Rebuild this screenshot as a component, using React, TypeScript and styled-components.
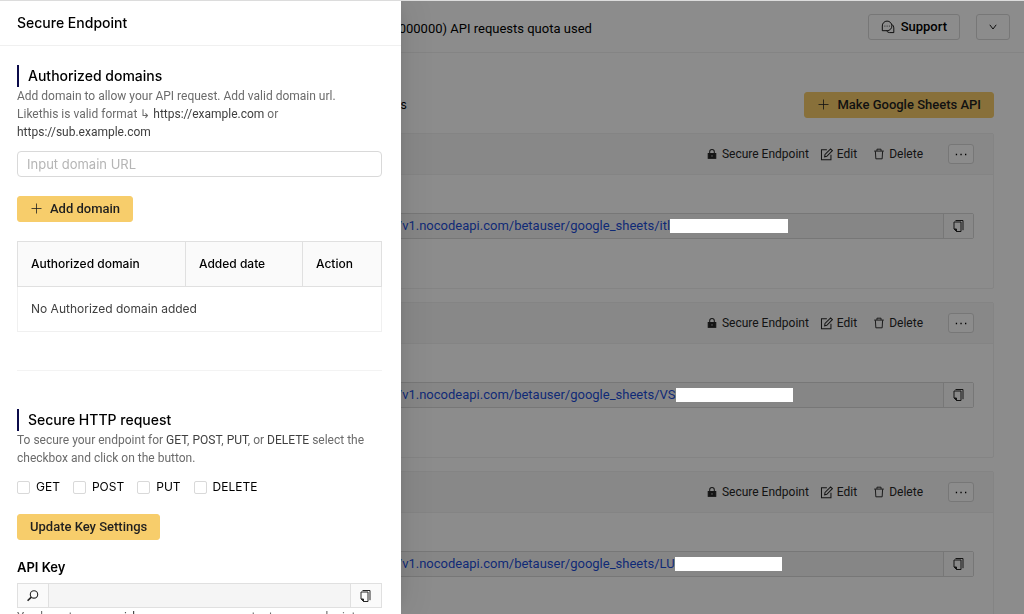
import React from "react";
import styled, { createGlobalStyle } from "styled-components";

const GlobalStyle = createGlobalStyle`
  *, *::before, *::after { box-sizing: border-box; }
  html, body { margin: 0; background: #fff; overflow: hidden; }
  body, button, input { font-family: Inter, "Liberation Sans", sans-serif; }
  body { color: #000; font-size: 12px; line-height: 18px; }
  button, input { margin: 0; }
  h1, h2, h3, p { margin: 0; }
`;

const narrow = `Roboto, "Liberation Sans", sans-serif`;

const Icon = styled.svg<{ $size?: number }>`
  flex: none;
  width: ${(p) => p.$size ?? 14}px;
  height: ${(p) => p.$size ?? 14}px;
  fill: none;
  stroke: currentColor;
`;

const PlusIcon = () => (
  <Icon viewBox="0 0 14 14" strokeWidth="0.8" aria-hidden="true">
    <path d="M6.5 1.5v10M1.5 6.5h10" />
  </Icon>
);

const CopyIcon = () => (
  <Icon viewBox="0 0 14 14" strokeWidth="1" aria-hidden="true">
    <path d="M2 3h7v9.5H4.5L2 10z" />
    <path d="M2 10h2.5v2.5z" fill="currentColor" />
    <path d="M3.5 1.5H11v9.7" />
  </Icon>
);

const SearchIcon = () => (
  <Icon viewBox="0 0 14 14" strokeWidth="1.1" aria-hidden="true">
    <circle cx="8" cy="5.4" r="3.7" />
    <path d="M5.3 8.1 1.6 11.8" strokeWidth="1.6" />
  </Icon>
);

const LockIcon = () => (
  <Icon viewBox="0 0 11 13" $size={12} strokeWidth="1.1" aria-hidden="true">
    <path d="M3 6V4a2.5 2.5 0 0 1 5 0v2" />
    <rect x="1.4" y="6" width="8.2" height="5.2" fill="currentColor" />
    <path d="M5.5 7.8v1.6" stroke="#ccc" strokeWidth="1" />
  </Icon>
);

const EditIcon = () => (
  <Icon viewBox="0 0 14 14" $size={13} strokeWidth="1.1" aria-hidden="true">
    <path d="M7.4 2H1.6v10.6h10.2V7.4" />
    <path d="m5 9.4.4-2.4 6-6 1.9 1.9-6 6z" />
  </Icon>
);

const TrashIcon = () => (
  <Icon viewBox="0 0 14 14" $size={12} strokeWidth="1.1" aria-hidden="true">
    <path d="M1.4 3.6h11.2M4.6 3.4V1.4h4.8v2M2.8 3.8l.5 8.8h7.4l.5-8.8" />
  </Icon>
);

const ChatIcon = () => (
  <Icon viewBox="0 0 14 14" strokeWidth="0.9" aria-hidden="true">
    <path d="M1.3 10.7V6a4.8 4.8 0 1 1 4.8 4.7z" />
    <path d="M11.3 4.6a4.4 4.4 0 0 1 1.5 3.3v4.7H8.6a4.4 4.4 0 0 1-3-1.6" />
    <path d="M3.5 6.1h.8M5.7 6.1h.8M7.9 6.1h.8" />
  </Icon>
);

const ChevronIcon = () => (
  <Icon viewBox="0 0 10 10" $size={10} strokeWidth="0.9" aria-hidden="true">
    <path d="m1.8 2.8 3.2 4.2 3.2-4.2" />
  </Icon>
);

const DotsIcon = () => (
  <Icon viewBox="0 0 14 14" strokeWidth="1.3" aria-hidden="true">
    <path d="M1.8 7.5h1.3M6.4 7.5h1.3M11 7.5h1.3" />
  </Icon>
);

/* Page behind the drawer */

const TopBar = styled.header`
  display: flex;
  align-items: center;
  gap: 16px;
  height: 53px;
  padding: 1px 14px 0 318px;
  border-bottom: 1px solid #f0f0f0;
`;

const Quota = styled.span`
  flex: 1;
  padding-top: 4px;
  font-family: ${narrow};
  font-size: 13px;
`;

const Button = styled.button<{ $primary?: boolean }>`
  display: inline-flex;
  align-items: center;
  justify-content: center;
  gap: 6px;
  height: 26px;
  padding: 0 12px;
  border: 1px solid ${(p) => (p.$primary ? "#f7cd6b" : "#d9d9d9")};
  border-radius: 3px;
  background: ${(p) => (p.$primary ? "#f7cd6b" : "#fff")};
  color: ${(p) => (p.$primary ? "#1f1f1f" : "#000")};
  font-family: ${narrow};
  font-size: 13px;
  font-weight: 500;
  line-height: 18px;
  white-space: nowrap;
`;

const MenuButton = styled(Button)`
  width: 34px;
  padding: 0;
`;

const Main = styled.main`
  padding: 39px 30px 0 289px;
`;

const TitleRow = styled.div`
  display: flex;
  align-items: center;
  justify-content: space-between;
  margin-bottom: 15px;
  padding-left: 6px;
`;

const PageTitle = styled.h1`
  font-size: 12px;
  font-weight: 400;
  line-height: 18px;
`;

const CardList = styled.div`
  display: flex;
  flex-direction: column;
  gap: 13px;
`;

const Card = styled.article`
  border: 1px solid #f0f0f0;
  border-radius: 2px;
`;

const CardHeader = styled.div`
  display: flex;
  align-items: center;
  justify-content: flex-end;
  height: 41px;
  padding: 0 19px;
  border-bottom: 1px solid #f0f0f0;
  background: #f7f7f7;
`;

const CardAction = styled.button<{ $gap: number }>`
  display: inline-flex;
  align-items: center;
  gap: 4px;
  margin-right: ${(p) => p.$gap}px;
  padding: 0;
  border: 0;
  background: none;
  color: #262626;
  font-family: ${narrow};
  font-size: 12px;
  line-height: 18px;
`;

const MoreButton = styled(Button)`
  width: 26px;
  height: 20px;
  padding: 0;
`;

const CardBody = styled.div`
  padding: 38px 19px 49px;
`;

const Endpoint = styled.div`
  display: flex;
  height: 26px;
  border: 1px solid #d9d9d9;
  border-radius: 2px;
  background: #f5f5f5;
`;

const EndpointUrl = styled.div`
  display: flex;
  flex: 1;
  align-items: center;
  padding-left: 50px;
`;

const EndpointLink = styled.a`
  color: #1d4ed8;
  font-family: ${narrow};
  font-size: 13px;
  text-decoration: none;
`;

const Redaction = styled.span<{ $width: number }>`
  position: relative;
  z-index: 11;
  width: ${(p) => p.$width}px;
  height: 14px;
  background: #fff;
`;

const CopyButton = styled.button`
  display: flex;
  align-items: center;
  justify-content: center;
  width: 30px;
  padding: 0;
  border: 0;
  border-left: 1px solid #d9d9d9;
  background: #fafafa;
  color: #262626;
`;

/* Drawer */

const Mask = styled.div`
  position: fixed;
  inset: 0;
  z-index: 10;
  background: rgba(0, 0, 0, 0.45);
`;

const Drawer = styled.aside`
  position: fixed;
  top: 0;
  bottom: 0;
  left: 0;
  z-index: 20;
  width: 401px;
  overflow: hidden;
  background: #fff;
  box-shadow: 6px 0 16px -8px rgba(0, 0, 0, 0.1), 9px 0 28px rgba(0, 0, 0, 0.06);
`;

const WindowEdge = styled.div`
  position: fixed;
  top: 0;
  left: 0;
  right: 0;
  z-index: 30;
  height: 1px;
  background: #dcdcdc;
`;

const DrawerHeader = styled.div`
  padding: 14px 17px 13px;
  border-bottom: 1px solid #f0f0f0;
`;

const DrawerTitle = styled.h2`
  font-size: 14px;
  font-weight: 500;
  line-height: 18px;
`;

const DrawerBody = styled.div`
  padding: 19px 19px 0 17px;
`;

const SectionTitle = styled.h3`
  padding-left: 9px;
  border-left: 2px solid #0b0b4a;
  font-size: 14px;
  font-weight: 500;
  line-height: 22px;
`;

const Text = styled.p`
  color: #6b6b6b;
  font-family: ${narrow};
  font-size: 12px;
  line-height: 18px;
`;

const Strong = styled.span`
  color: #404040;
`;

const DomainInput = styled.input`
  display: block;
  width: 100%;
  height: 26px;
  margin: 10px 0 19px;
  padding: 0 9px;
  border: 1px solid #d9d9d9;
  border-radius: 4px;
  color: #262626;
  font-size: 13px;
  &::placeholder { color: #b5b5b5; }
`;

const Table = styled.table`
  width: 100%;
  margin: 19px 0 38px;
  border-collapse: collapse;
  table-layout: fixed;
  text-align: left;
`;

const Th = styled.th<{ $width?: number }>`
  width: ${(p) => (p.$width ? `${p.$width}px` : "auto")};
  height: 45px;
  padding: 0 13px;
  border: 1px solid #e0e0e0;
  background: #fafafa;
  font-weight: 500;
`;

const Td = styled.td`
  height: 45px;
  padding: 0 13px;
  border: 1px solid #f0f0f0;
  color: #404040;
`;

const Divider = styled.hr`
  height: 1px;
  margin: 0 0 38px;
  border: 0;
  background: #f3f3f3;
`;

const Methods = styled.div`
  display: flex;
  gap: 13px;
  margin: 11px 0 18px;
`;

const Method = styled.label`
  display: flex;
  align-items: center;
  gap: 6px;
`;

const Checkbox = styled.input`
  appearance: none;
  width: 13px;
  height: 13px;
  border: 1px solid #d9d9d9;
  border-radius: 2px;
  background: #fff;
`;

const KeyLabel = styled.label`
  display: block;
  margin: 18px 0 7px;
  font-size: 13px;
  font-weight: 600;
`;

const KeyRow = styled.div`
  display: flex;
  height: 25px;
  border: 1px solid #e0e0e0;
`;

const KeyAddon = styled.button`
  display: flex;
  align-items: center;
  justify-content: center;
  width: 30px;
  padding: 0;
  border: 0;
  background: #fafafa;
  color: #262626;
`;

const KeyInput = styled.input`
  flex: 1;
  min-width: 0;
  border: 0;
  border-left: 1px solid #e0e0e0;
  border-right: 1px solid #e0e0e0;
  background: #f5f5f5;
`;

const endpoints = [
  { id: "itl", hidden: 118 },
  { id: "VS", hidden: 117 },
  { id: "LU", hidden: 107 },
];

const methods = ["GET", "POST", "PUT", "DELETE"];

export default function App() {
  return (
    <>
      <GlobalStyle />
      <TopBar>
        <Quota>Free plan (0/1000000) API requests quota used</Quota>
        <Button type="button"><ChatIcon />Support</Button>
        <MenuButton type="button" aria-label="Account"><ChevronIcon /></MenuButton>
      </TopBar>
      <Main>
        <TitleRow>
          <PageTitle>Google Sheets APIs</PageTitle>
          <Button type="button" $primary><PlusIcon />Make Google Sheets API</Button>
        </TitleRow>
        <CardList>
          {endpoints.map((e) => (
            <Card key={e.id}>
              <CardHeader>
                <CardAction type="button" $gap={11}><LockIcon />Secure Endpoint</CardAction>
                <CardAction type="button" $gap={16}><EditIcon />Edit</CardAction>
                <CardAction type="button" $gap={25}><TrashIcon />Delete</CardAction>
                <MoreButton type="button" aria-label="More"><DotsIcon /></MoreButton>
              </CardHeader>
              <CardBody>
                <Endpoint>
                  <EndpointUrl>
                    <EndpointLink href="#">{`https://v1.nocodeapi.com/betauser/google_sheets/${e.id}`}</EndpointLink>
                    <Redaction $width={e.hidden} />
                  </EndpointUrl>
                  <CopyButton type="button" aria-label="Copy"><CopyIcon /></CopyButton>
                </Endpoint>
              </CardBody>
            </Card>
          ))}
        </CardList>
      </Main>
      <Mask />
      <Drawer>
        <DrawerHeader><DrawerTitle>Secure Endpoint</DrawerTitle></DrawerHeader>
        <DrawerBody>
          <SectionTitle>Authorized domains</SectionTitle>
          <Text>
            Add domain to allow your API request. Add valid domain url.<br />
            Likethis is valid format ↳ <Strong>https://example.com</Strong> or<br />
            <Strong>https://sub.example.com</Strong>
          </Text>
          <DomainInput type="text" placeholder="Input domain URL" aria-label="Domain URL" />
          <Button type="button" $primary><PlusIcon />Add domain</Button>
          <Table>
            <thead>
              <tr>
                <Th $width={168}>Authorized domain</Th>
                <Th $width={117}>Added date</Th>
                <Th>Action</Th>
              </tr>
            </thead>
            <tbody>
              <tr><Td colSpan={3}>No Authorized domain added</Td></tr>
            </tbody>
          </Table>
          <Divider />
          <SectionTitle>Secure HTTP request</SectionTitle>
          <Text>
            To secure your endpoint for <Strong>GET</Strong>, <Strong>POST</Strong>, <Strong>PUT</Strong>, or{" "}
            <Strong>DELETE</Strong> select the checkbox and click on the button.
          </Text>
          <Methods>
            {methods.map((m) => (
              <Method key={m}><Checkbox type="checkbox" />{m}</Method>
            ))}
          </Methods>
          <Button type="button" $primary>Update Key Settings</Button>
          <KeyLabel htmlFor="api-key">API Key</KeyLabel>
          <KeyRow>
            <KeyAddon type="button" aria-label="Show key"><SearchIcon /></KeyAddon>
            <KeyInput id="api-key" type="text" readOnly />
            <KeyAddon type="button" aria-label="Copy key"><CopyIcon /></KeyAddon>
          </KeyRow>
          <Text>You have to pass <Strong>api_key</Strong> as a query parameter to your endpoint</Text>
        </DrawerBody>
      </Drawer>
      <WindowEdge />
    </>
  );
}
